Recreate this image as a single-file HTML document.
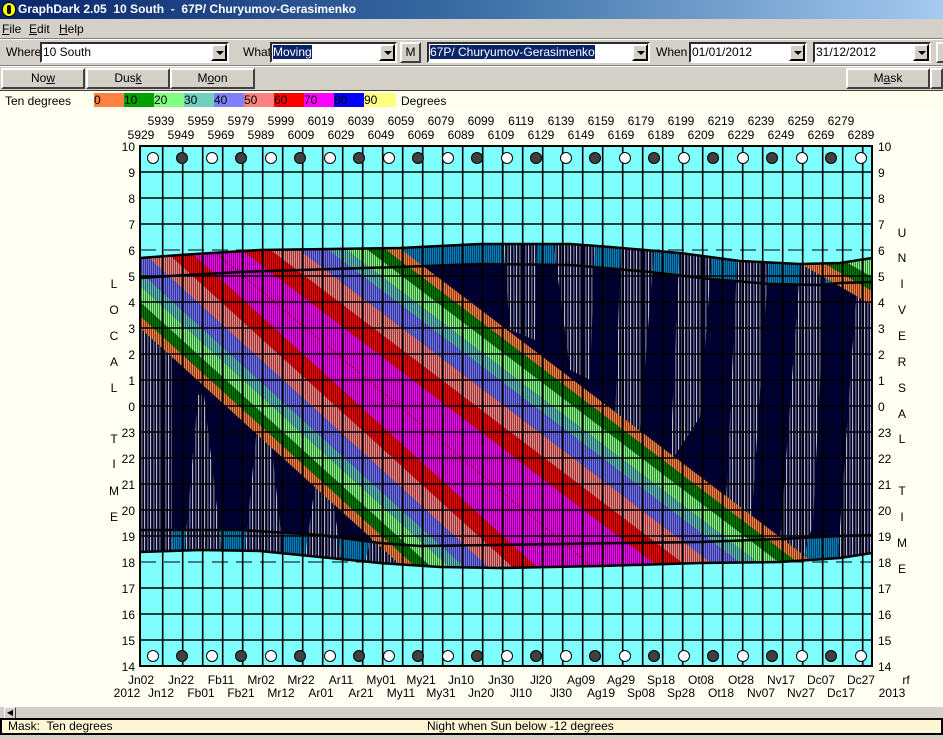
<!DOCTYPE html>
<html><head><meta charset="utf-8"><style>
*{margin:0;padding:0;box-sizing:border-box}
html,body{width:943px;height:739px;overflow:hidden}
body{background:#d4d0c8;font-family:"Liberation Sans",sans-serif;font-size:12px;position:relative;color:#000}
.a{position:absolute}
.title{left:0;top:0;width:943px;height:19px;background:linear-gradient(to right,#0a246a 0%,#3a6ea5 50%,#a6caf0 100%);color:#fff;font-weight:bold;font-size:12px;line-height:19px;padding-left:18px}
.combo{position:absolute;height:21px;background:#fff;border:2px inset #c0c0c0;border-color:#808080 #fff #fff #808080;font-size:12px;line-height:17px;padding-left:1px;white-space:nowrap;overflow:hidden}
.dd{position:absolute;right:0;top:0;width:16px;height:17px;background:#d4d0c8;border:2px outset #fff;border-color:#fff #404040 #404040 #fff}
.dd:after{content:"";position:absolute;left:3px;top:5px;border:4px solid transparent;border-top:4px solid #000;border-bottom:0}
.sel{background:#0a246a;color:#fff}
.btn{position:absolute;height:21px;background:#d4d0c8;border:2px solid;border-color:#fff #404040 #404040 #fff;text-align:center;line-height:17px;font-size:12px}
u{text-decoration:underline}
</style></head><body>
<div class="a title">GraphDark 2.05&nbsp; 10 South&nbsp; -&nbsp; 67P/ Churyumov-Gerasimenko</div>
<div class="a" style="left:2px;top:2px;width:14px;height:15px;background:#ffff00;border-radius:7px;border:1px solid #000"><div style="position:absolute;left:4px;top:2px;width:4px;height:9px;background:#000;border-radius:2px"></div></div>
<div class="a" style="left:2px;top:21px;line-height:16px"><u>F</u>ile</div>
<div class="a" style="left:29px;top:21px;line-height:16px"><u>E</u>dit</div>
<div class="a" style="left:59px;top:21px;line-height:16px"><u>H</u>elp</div>
<div class="a" style="left:0;top:38px;width:943px;height:2px;border-top:1px solid #808080;border-bottom:1px solid #fff"></div>
<div class="a" style="left:6px;top:45px">Where</div>
<div class="combo" style="left:40px;top:42px;width:189px">10 South<div class="dd"></div></div>
<div class="a" style="left:243px;top:45px">What</div>
<div class="combo" style="left:270px;top:42px;width:127px"><span class="sel">Moving</span><div class="dd"></div></div>
<div class="btn" style="left:400px;top:42px;width:21px">M</div>
<div class="combo" style="left:427px;top:42px;width:223px"><span class="sel">67P/ Churyumov-Gerasimenko</span><div class="dd"></div></div>
<div class="a" style="left:656px;top:45px">When</div>
<div class="combo" style="left:689px;top:42px;width:118px">01/01/2012<div class="dd"></div></div>
<div class="combo" style="left:813px;top:42px;width:118px">31/12/2012<div class="dd"></div></div>
<div class="btn" style="left:936px;top:42px;width:12px"></div>
<div class="a" style="left:0;top:65px;width:943px;height:2px;border-top:1px solid #808080;border-bottom:1px solid #fff"></div>
<div class="btn" style="left:1px;top:68px;width:84px">No<u>w</u></div>
<div class="btn" style="left:86px;top:68px;width:84px">Dus<u>k</u></div>
<div class="btn" style="left:170px;top:68px;width:85px">M<u>o</u>on</div>
<div class="btn" style="left:846px;top:68px;width:84px">M<u>a</u>sk</div>
<div class="btn" style="left:930px;top:68px;width:13px"></div>
<div class="a" style="left:0;top:90px;width:943px;height:19px;border-top:1px solid #404040;background:#fffff0"></div>
<div class="a" style="left:5px;top:94px">Ten degrees</div>
<div class="a" style="left:94px;top:93px;height:14px;width:302px;display:flex;font-size:12px;line-height:14px;overflow:hidden">
<div style="width:30px;background:#ff8040">0</div><div style="width:30px;background:#00a000">10</div><div style="width:30px;background:#80ff80">20</div><div style="width:30px;background:#70d0c0">30</div><div style="width:30px;background:#8080ff">40</div><div style="width:30px;background:#ff8080">50</div><div style="width:30px;background:#ff0000">60</div><div style="width:30px;background:#ff00ff">70</div><div style="width:30px;background:#0000ff">80</div><div style="width:32px;background:#ffff80">90</div></div>
<div class="a" style="left:401px;top:94px">Degrees</div>
<div class="a" style="left:0;top:109px;width:943px;height:598px;background:#fffff4"></div>
<svg class="a" style="left:0;top:0" width="943" height="739" font-family="Liberation Sans, sans-serif" font-size="12">
<defs>
<clipPath id="reg"><polygon points="140,258 180,255 260,250 400,248 480,244 570,244 610,247 680,253 740,261 800,264 840,263 872,258 872,553 840,558 780,562 700,563 600,566 500,568 440,567 380,563 320,557 260,551 200,550 140,552"/></clipPath>
<pattern id="gp" width="3" height="4" patternUnits="userSpaceOnUse"><rect width="3" height="4" fill="#000040"/><rect width="1.3" height="4" fill="#b8b8c8"/></pattern>
<pattern id="st" width="2" height="4" patternUnits="userSpaceOnUse"><rect x="1" width="1" height="4" fill="#000" opacity="0.5"/></pattern>
</defs>
<rect x="140" y="146" width="732" height="520" fill="#80ffff"/>
<g stroke="#000" stroke-dasharray="16 8"><line x1="140" y1="250" x2="872" y2="250"/><line x1="140" y1="562" x2="872" y2="562"/></g>
<g clip-path="url(#reg)">
<rect x="140" y="240" width="732" height="330" fill="#000040"/>
<polygon fill="#0080c0" points="140,258 180,255 260,250 400,248 480,244 570,244 610,247 680,253 740,261 800,264 840,263 872,258 872,282 840,283 820,285 770,284 710,279 650,272 570,265 480,264 400,267 300,270 240,272 170,276 140,278"/>
<polygon fill="#0080c0" points="140,530 240,530 320,535 380,543 420,546 560,544 700,542 780,539 840,536 872,535 872,553 840,558 780,562 700,563 600,566 500,568 440,567 380,563 320,557 260,551 200,550 140,552"/>
<g fill="url(#gp)">
<polygon points="140,240 172,240 172,570 140,570"/>
<polygon points="198,395 204,395 224,570 183,570"/>
<polygon points="260,395 266,395 285,570 243,570"/>
<polygon points="320,450 326,450 343,570 303,570"/>
<polygon points="380,510 386,510 400,570 362,570"/>
<polygon points="503,240 537,240 535,340 510,330"/>
<polygon points="553,240 595,240 590,380 570,370"/>
<polygon points="621,240 655,240 640,430 618,485 613,483"/>
<polygon points="680,240 713,240 700,417 670,463"/>
<polygon points="738,240 770,240 753,500 745,570 723,570"/>
<polygon points="802,240 827,240 813,523 800,570 778,570"/>
<polygon points="860,240 872,240 872,570 837,570"/>
</g>
<polygon fill="#ff8040" points="140,51 872,607 872,619 140,63"/>
<polygon fill="#008000" points="140,63 872,619 872,633 140,77"/>
<polygon fill="#80ff80" points="140,77 872,633 872,649 140,93"/>
<polygon fill="#60c0c0" points="140,93 872,649 872,663 140,107"/>
<polygon fill="#7070ff" points="140,107 872,663 872,685 140,129"/>
<polygon fill="#ff8080" points="140,129 872,685 872,707 140,151"/>
<polygon fill="#ff0000" points="140,151 872,707 872,729 140,173"/>
<polygon fill="#ff00ff" points="140,173 872,729 872,872 140,206"/>
<polygon fill="#ff0000" points="140,206 872,872 872,894 140,228"/>
<polygon fill="#ff8080" points="140,228 872,894 872,916 140,250"/>
<polygon fill="#7070ff" points="140,250 872,916 872,938 140,272"/>
<polygon fill="#60c0c0" points="140,272 872,938 872,952 140,286"/>
<polygon fill="#80ff80" points="140,286 872,952 872,968 140,302"/>
<polygon fill="#008000" points="140,302 872,968 872,982 140,316"/>
<polygon fill="#ff8040" points="140,316 872,982 872,994 140,328"/>
<polygon fill="#ff8040" points="780,238 872,291 872,305 780,252"/>
<polygon fill="#008000" points="780,224 872,277 872,291 780,238"/>
<polygon fill="#80ff80" points="780,200 872,253 872,277 780,224"/>
<line x1="140" y1="190" x2="872" y2="800" stroke="#c00000" stroke-dasharray="2 2"/>
<rect x="140" y="240" width="732" height="330" fill="url(#st)"/>
</g>
<g fill="none" stroke="#000" stroke-width="2.5">
<polyline points="140,258 180,255 260,250 400,248 480,244 570,244 610,247 680,253 740,261 800,264 840,263 872,258"/>
<polyline points="140,278 170,276 240,272 300,270 400,267 480,264 570,265 650,272 710,279 770,284 820,285 840,283 872,282"/>
<polyline points="140,530 240,530 320,535 380,543 420,546 560,544 700,542 780,539 840,536 872,535"/>
<polyline points="140,552 200,550 260,551 320,557 380,563 440,567 500,568 600,566 700,563 780,562 840,558 872,553"/>
</g>
<g stroke="#000" stroke-width="1.5">
<line x1="140" y1="172" x2="872" y2="172"/><line x1="140" y1="198" x2="872" y2="198"/><line x1="140" y1="224" x2="872" y2="224"/><line x1="140" y1="276" x2="872" y2="276"/><line x1="140" y1="302" x2="872" y2="302"/><line x1="140" y1="328" x2="872" y2="328"/><line x1="140" y1="354" x2="872" y2="354"/><line x1="140" y1="380" x2="872" y2="380"/><line x1="140" y1="406" x2="872" y2="406"/><line x1="140" y1="432" x2="872" y2="432"/><line x1="140" y1="458" x2="872" y2="458"/><line x1="140" y1="484" x2="872" y2="484"/><line x1="140" y1="510" x2="872" y2="510"/><line x1="140" y1="536" x2="872" y2="536"/><line x1="140" y1="588" x2="872" y2="588"/><line x1="140" y1="614" x2="872" y2="614"/><line x1="140" y1="640" x2="872" y2="640"/>
</g>
<g stroke="#000" stroke-width="1.6">
<line x1="162.7" y1="146" x2="162.7" y2="666"/><line x1="182.7" y1="146" x2="182.7" y2="666"/><line x1="202.7" y1="146" x2="202.7" y2="666"/><line x1="222.7" y1="146" x2="222.7" y2="666"/><line x1="242.7" y1="146" x2="242.7" y2="666"/><line x1="262.7" y1="146" x2="262.7" y2="666"/><line x1="282.7" y1="146" x2="282.7" y2="666"/><line x1="302.7" y1="146" x2="302.7" y2="666"/><line x1="322.7" y1="146" x2="322.7" y2="666"/><line x1="342.7" y1="146" x2="342.7" y2="666"/><line x1="362.7" y1="146" x2="362.7" y2="666"/><line x1="382.7" y1="146" x2="382.7" y2="666"/><line x1="402.7" y1="146" x2="402.7" y2="666"/><line x1="422.7" y1="146" x2="422.7" y2="666"/><line x1="442.7" y1="146" x2="442.7" y2="666"/><line x1="462.7" y1="146" x2="462.7" y2="666"/><line x1="482.7" y1="146" x2="482.7" y2="666"/><line x1="502.7" y1="146" x2="502.7" y2="666"/><line x1="522.7" y1="146" x2="522.7" y2="666"/><line x1="542.7" y1="146" x2="542.7" y2="666"/><line x1="562.7" y1="146" x2="562.7" y2="666"/><line x1="582.7" y1="146" x2="582.7" y2="666"/><line x1="602.7" y1="146" x2="602.7" y2="666"/><line x1="622.7" y1="146" x2="622.7" y2="666"/><line x1="642.7" y1="146" x2="642.7" y2="666"/><line x1="662.7" y1="146" x2="662.7" y2="666"/><line x1="682.7" y1="146" x2="682.7" y2="666"/><line x1="702.7" y1="146" x2="702.7" y2="666"/><line x1="722.7" y1="146" x2="722.7" y2="666"/><line x1="742.7" y1="146" x2="742.7" y2="666"/><line x1="762.7" y1="146" x2="762.7" y2="666"/><line x1="782.7" y1="146" x2="782.7" y2="666"/><line x1="802.7" y1="146" x2="802.7" y2="666"/><line x1="822.7" y1="146" x2="822.7" y2="666"/><line x1="842.7" y1="146" x2="842.7" y2="666"/><line x1="862.7" y1="146" x2="862.7" y2="666"/>
</g>
<rect x="140" y="146" width="732" height="520" fill="none" stroke="#000" stroke-width="2"/>
<g stroke="#000" stroke-width="1">
<circle cx="153" cy="158" r="5.5" fill="#fff"/><circle cx="182" cy="158" r="5.5" fill="#404040"/><circle cx="212" cy="158" r="5.5" fill="#fff"/><circle cx="241" cy="158" r="5.5" fill="#404040"/><circle cx="271" cy="158" r="5.5" fill="#fff"/><circle cx="300" cy="158" r="5.5" fill="#404040"/><circle cx="330" cy="158" r="5.5" fill="#fff"/><circle cx="359" cy="158" r="5.5" fill="#404040"/><circle cx="389" cy="158" r="5.5" fill="#fff"/><circle cx="418" cy="158" r="5.5" fill="#404040"/><circle cx="448" cy="158" r="5.5" fill="#fff"/><circle cx="477" cy="158" r="5.5" fill="#404040"/><circle cx="507" cy="158" r="5.5" fill="#fff"/><circle cx="536" cy="158" r="5.5" fill="#404040"/><circle cx="566" cy="158" r="5.5" fill="#fff"/><circle cx="595" cy="158" r="5.5" fill="#404040"/><circle cx="625" cy="158" r="5.5" fill="#fff"/><circle cx="654" cy="158" r="5.5" fill="#404040"/><circle cx="684" cy="158" r="5.5" fill="#fff"/><circle cx="713" cy="158" r="5.5" fill="#404040"/><circle cx="743" cy="158" r="5.5" fill="#fff"/><circle cx="772" cy="158" r="5.5" fill="#404040"/><circle cx="802" cy="158" r="5.5" fill="#fff"/><circle cx="831" cy="158" r="5.5" fill="#404040"/><circle cx="861" cy="158" r="5.5" fill="#fff"/>
<circle cx="153" cy="656" r="5.5" fill="#fff"/><circle cx="182" cy="656" r="5.5" fill="#404040"/><circle cx="212" cy="656" r="5.5" fill="#fff"/><circle cx="241" cy="656" r="5.5" fill="#404040"/><circle cx="271" cy="656" r="5.5" fill="#fff"/><circle cx="300" cy="656" r="5.5" fill="#404040"/><circle cx="330" cy="656" r="5.5" fill="#fff"/><circle cx="359" cy="656" r="5.5" fill="#404040"/><circle cx="389" cy="656" r="5.5" fill="#fff"/><circle cx="418" cy="656" r="5.5" fill="#404040"/><circle cx="448" cy="656" r="5.5" fill="#fff"/><circle cx="477" cy="656" r="5.5" fill="#404040"/><circle cx="507" cy="656" r="5.5" fill="#fff"/><circle cx="536" cy="656" r="5.5" fill="#404040"/><circle cx="566" cy="656" r="5.5" fill="#fff"/><circle cx="595" cy="656" r="5.5" fill="#404040"/><circle cx="625" cy="656" r="5.5" fill="#fff"/><circle cx="654" cy="656" r="5.5" fill="#404040"/><circle cx="684" cy="656" r="5.5" fill="#fff"/><circle cx="713" cy="656" r="5.5" fill="#404040"/><circle cx="743" cy="656" r="5.5" fill="#fff"/><circle cx="772" cy="656" r="5.5" fill="#404040"/><circle cx="802" cy="656" r="5.5" fill="#fff"/><circle cx="831" cy="656" r="5.5" fill="#404040"/><circle cx="861" cy="656" r="5.5" fill="#fff"/>
</g>
<g text-anchor="end">
<text x="135" y="151">10</text><text x="135" y="177">9</text><text x="135" y="203">8</text><text x="135" y="229">7</text><text x="135" y="255">6</text><text x="135" y="281">5</text><text x="135" y="307">4</text><text x="135" y="333">3</text><text x="135" y="359">2</text><text x="135" y="385">1</text><text x="135" y="411">0</text><text x="135" y="437">23</text><text x="135" y="463">22</text><text x="135" y="489">21</text><text x="135" y="515">20</text><text x="135" y="541">19</text><text x="135" y="567">18</text><text x="135" y="593">17</text><text x="135" y="619">16</text><text x="135" y="645">15</text><text x="135" y="671">14</text>
</g>
<g>
<text x="878" y="151">10</text><text x="878" y="177">9</text><text x="878" y="203">8</text><text x="878" y="229">7</text><text x="878" y="255">6</text><text x="878" y="281">5</text><text x="878" y="307">4</text><text x="878" y="333">3</text><text x="878" y="359">2</text><text x="878" y="385">1</text><text x="878" y="411">0</text><text x="878" y="437">23</text><text x="878" y="463">22</text><text x="878" y="489">21</text><text x="878" y="515">20</text><text x="878" y="541">19</text><text x="878" y="567">18</text><text x="878" y="593">17</text><text x="878" y="619">16</text><text x="878" y="645">15</text><text x="878" y="671">14</text>
</g>
<g text-anchor="middle">
<text x="114" y="288">L</text><text x="114" y="314">O</text><text x="114" y="340">C</text><text x="114" y="366">A</text><text x="114" y="392">L</text><text x="114" y="443">T</text><text x="114" y="468">I</text><text x="114" y="495">M</text><text x="114" y="521">E</text>
<text x="902" y="237">U</text><text x="902" y="262">N</text><text x="902" y="288">I</text><text x="902" y="314">V</text><text x="902" y="340">E</text><text x="902" y="366">R</text><text x="902" y="392">S</text><text x="902" y="418">A</text><text x="902" y="443">L</text><text x="902" y="495">T</text><text x="902" y="521">I</text><text x="902" y="547">M</text><text x="902" y="573">E</text>
<text x="161" y="125">5939</text><text x="201" y="125">5959</text><text x="241" y="125">5979</text><text x="281" y="125">5999</text><text x="321" y="125">6019</text><text x="361" y="125">6039</text><text x="401" y="125">6059</text><text x="441" y="125">6079</text><text x="481" y="125">6099</text><text x="521" y="125">6119</text><text x="561" y="125">6139</text><text x="601" y="125">6159</text><text x="641" y="125">6179</text><text x="681" y="125">6199</text><text x="721" y="125">6219</text><text x="761" y="125">6239</text><text x="801" y="125">6259</text><text x="841" y="125">6279</text>
<text x="141" y="139">5929</text><text x="181" y="139">5949</text><text x="221" y="139">5969</text><text x="261" y="139">5989</text><text x="301" y="139">6009</text><text x="341" y="139">6029</text><text x="381" y="139">6049</text><text x="421" y="139">6069</text><text x="461" y="139">6089</text><text x="501" y="139">6109</text><text x="541" y="139">6129</text><text x="581" y="139">6149</text><text x="621" y="139">6169</text><text x="661" y="139">6189</text><text x="701" y="139">6209</text><text x="741" y="139">6229</text><text x="781" y="139">6249</text><text x="821" y="139">6269</text><text x="861" y="139">6289</text>
<text x="141" y="684">Jn02</text><text x="181" y="684">Jn22</text><text x="221" y="684">Fb11</text><text x="261" y="684">Mr02</text><text x="301" y="684">Mr22</text><text x="341" y="684">Ar11</text><text x="381" y="684">My01</text><text x="421" y="684">My21</text><text x="461" y="684">Jn10</text><text x="501" y="684">Jn30</text><text x="541" y="684">Jl20</text><text x="581" y="684">Ag09</text><text x="621" y="684">Ag29</text><text x="661" y="684">Sp18</text><text x="701" y="684">Ot08</text><text x="741" y="684">Ot28</text><text x="781" y="684">Nv17</text><text x="821" y="684">Dc07</text><text x="861" y="684">Dc27</text><text x="906" y="684">rf</text>
<text x="127" y="697">2012</text><text x="161" y="697">Jn12</text><text x="201" y="697">Fb01</text><text x="241" y="697">Fb21</text><text x="281" y="697">Mr12</text><text x="321" y="697">Ar01</text><text x="361" y="697">Ar21</text><text x="401" y="697">My11</text><text x="441" y="697">My31</text><text x="481" y="697">Jn20</text><text x="521" y="697">Jl10</text><text x="561" y="697">Jl30</text><text x="601" y="697">Ag19</text><text x="641" y="697">Sp08</text><text x="681" y="697">Sp28</text><text x="721" y="697">Ot18</text><text x="761" y="697">Nv07</text><text x="801" y="697">Nv27</text><text x="841" y="697">Dc17</text><text x="892" y="697">2013</text>
</g>
</svg>
<div class="a" style="left:0;top:706px;width:943px;height:13px;background:#d4d0c8;border-top:1px solid #fff"></div>
<div class="a" style="left:4px;top:707px;width:12px;height:12px;background:#d4d0c8;border:1px solid;border-color:#fff #404040 #404040 #fff;font-size:8px;line-height:10px;text-align:center">◀</div>
<div class="a" style="left:0;top:718px;width:943px;height:17px;background:#fff6d6;border:2px solid #000;font-size:12px;line-height:13px;overflow:hidden">
<span style="position:absolute;left:6px;top:0">Mask:&nbsp; Ten degrees</span>
<span style="position:absolute;left:425px;top:0">Night when Sun below -12 degrees</span></div>
</body></html>
